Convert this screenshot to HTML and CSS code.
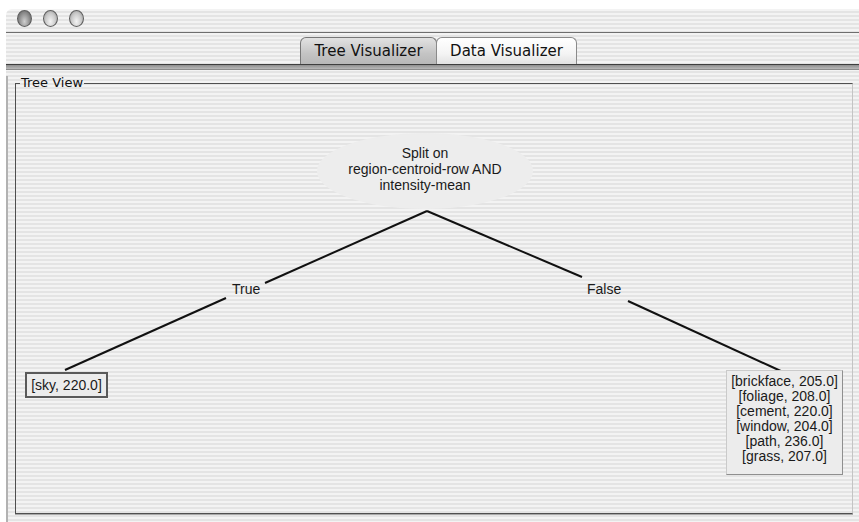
FILE: index.html
```html
<!DOCTYPE html>
<html lang="en">
<head>
    <meta charset="UTF-8">
    <title>Weka Classifier Tree Visualizer</title>
    <link rel="stylesheet" href="styles.css">
</head>
<body>
<div class="window">
    <div class="titlebar">
        <span class="light light-close"></span>
        <span class="light"></span>
        <span class="light"></span>
    </div>
    <div class="tabbar">
        <div class="tab tab-active">Tree Visualizer</div>
        <div class="tab tab-data">Data Visualizer</div>
    </div>
    <div class="tab-edge"></div>
    <div class="pane">
        <fieldset class="tree-view">
            <legend>Tree View</legend>
            <div class="canvas">
                <svg class="edges" width="836" height="423" viewBox="0 0 836 423">
                    <line x1="411" y1="121" x2="249" y2="193"/>
                    <line x1="210" y1="208" x2="49" y2="280"/>
                    <line x1="411" y1="121" x2="566" y2="187"/>
                    <line x1="612" y1="211" x2="767" y2="282"/>
                </svg>
                <div class="node node-root">Split on<br>region-centroid-row AND<br>intensity-mean</div>
                <span class="edge-label label-true">True</span>
                <span class="edge-label label-false">False</span>
                <div class="node node-sky">[sky, 220.0]</div>
                <div class="node node-rest">
                    [brickface, 205.0]<br>
                    [foliage, 208.0]<br>
                    [cement, 220.0]<br>
                    [window, 204.0]<br>
                    [path, 236.0]<br>
                    [grass, 207.0]
                </div>
            </div>
        </fieldset>
    </div>
</div>
</body>
</html>
```

FILE: styles.css
```css
*{
    margin: 0;
    padding: 0;
    box-sizing: border-box;
}
body{
    background: #fff;
    font-family: "Liberation Sans", Arial, sans-serif;
    color: #1a1a1a;
}
.window{
    width: 853px;
    height: 513px;
    margin: 9px 0 0 6px;
    border-radius: 6px 0 0 0;
    overflow: hidden;
    background: repeating-linear-gradient(#f3f3f3 0 2px, #e4e4e4 2px 4px);
}
.titlebar{
    height: 24px;
    display: flex;
    gap: 11px;
    padding: 1px 0 0 11px;
    border-bottom: 1px solid #6e6e6e;
}
.light{
    width: 15px;
    height: 17px;
    border-radius: 50%;
    border: 1px solid #5e5e5e;
    background: radial-gradient(ellipse at 50% 70%, #f4f4f4 0, #c9c9c9 55%, #8a8a8a 100%);
}
.light-close{
    background: radial-gradient(ellipse at 50% 70%, #cfcfcf 0, #8f8f8f 55%, #555 100%);
}
.tabbar{
    height: 31px;
    display: flex;
    align-items: flex-end;
    padding-left: 294px;
}
.tab{
    height: 27px;
    border: 1px solid #8a8a8a;
    border-bottom: none;
    border-radius: 6px 6px 0 0;
    font: 15px "DejaVu Sans", sans-serif;
    line-height: 26px;
    text-align: center;
    color: #111;
}
.tab-active{
    width: 137px;
    background: linear-gradient(#e2e2e2, #c4c4c4 60%, #b8b8b8);
    border-color: #777;
}
.tab-data{
    width: 141px;
    margin-left: -1px;
    background: linear-gradient(#ffffff, #f4f4f4 60%, #e2e2e2);
}
.tab-edge{
    height: 6px;
    border-top: 1px solid #3e3e3e;
    border-bottom: 1px solid #8c8c8c;
    background: linear-gradient(#8f8f8f, #b9b9b9);
}
.pane{
    height: 452px;
    border-left: 2px solid #b2b2b2;
    padding-left: 7px;
}
.tree-view{
    width: 838px;
    margin-top: 6px;
    border: 1px solid #4f4f4f;
    border-right-color: #c4c4c4;
    box-shadow: 0 1px 0 #a9a9a9;
    min-width: 0;
}
.tree-view legend{
    margin-left: 4px;
    padding: 0 1px;
    font: 13px "DejaVu Sans", sans-serif;
    line-height: 14px;
    color: #111;
}
.canvas{
    position: relative;
    height: 423px;
}
.edges{
    position: absolute;
    left: 0;
    top: 0;
}
.edges line{
    stroke: #111;
    stroke-width: 2;
}
.node{
    position: absolute;
    font-size: 14px;
    text-align: center;
}
.node-root{
    left: 301px;
    top: 43px;
    width: 216px;
    height: 76px;
    border-radius: 50%;
    background: #ededed;
    line-height: 16px;
    display: flex;
    align-items: center;
    justify-content: center;
    padding-bottom: 4px;
}
.edge-label{
    position: absolute;
    font-size: 14px;
    line-height: 16px;
}
.label-true{
    left: 216px;
    top: 191px;
}
.label-false{
    left: 571px;
    top: 191px;
}
.node-sky{
    left: 9px;
    top: 282px;
    width: 83px;
    height: 26px;
    border: 2px solid #5a5a5a;
    background: #ececec;
    line-height: 22px;
}
.node-rest{
    left: 710px;
    top: 280px;
    width: 117px;
    height: 105px;
    padding-top: 3px;
    border: 1px solid;
    border-color: #cacaca #8f8f8f #8f8f8f #cacaca;
    background: #ececec;
    line-height: 15px;
}
```
